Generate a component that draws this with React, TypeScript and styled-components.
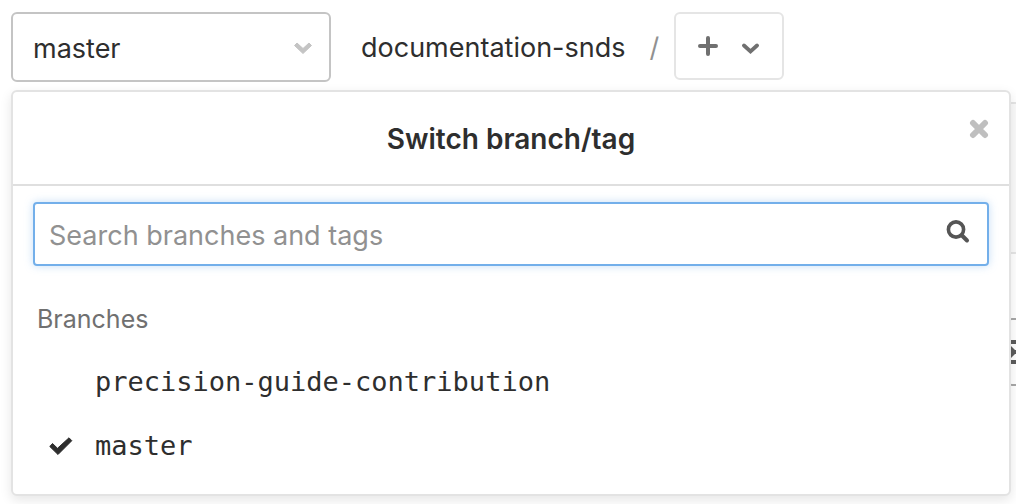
import React from 'react';
import styled, { createGlobalStyle } from 'styled-components';

const GlobalStyle = createGlobalStyle`
  * { box-sizing: border-box; }
  body {
    margin: 0;
    background: #fff;
    color: #2e2e2e;
    font-family: Inter, sans-serif;
    font-size: 27px;
    line-height: 36px;
  }
  button, input { font: inherit; color: inherit; margin: 0; }
`;

const Page = styled.main`
  position: relative;
  min-height: 504px;
  overflow: hidden;
`;

const Toolbar = styled.header`
  display: flex;
  align-items: flex-start;
  padding: 12px 11px 0;
  height: 102px;
`;

const RefToggle = styled.button`
  display: flex;
  align-items: center;
  justify-content: space-between;
  width: 320px;
  height: 70px;
  padding: 3px 17px 0 20px;
  border: 2px solid #c4c4c4;
  border-radius: 6px;
  background: #fff;
`;

const Breadcrumb = styled.nav`
  display: flex;
  gap: 24px;
  padding: 18px 15px 0 30px;
`;

const Crumb = styled.a`
  color: #2e2e2e;
  text-decoration: none;
`;

const Separator = styled.span`
  color: #919191;
`;

const AddButton = styled.button`
  display: flex;
  align-items: center;
  gap: 24px;
  height: 68px;
  padding: 0 23px 0 22px;
  border: 2px solid #e5e5e5;
  border-radius: 6px;
  background: #fff;
  color: #707070;
`;

const CommitPanel = styled.section`
  height: 152px;
  margin-left: 16px;
  border: 2px solid #e5e5e5;
  border-right: 0;
  background: #fafafa;
`;

const FileActions = styled.div`
  display: flex;
  justify-content: flex-end;
  margin: 64px -58px 0 0;
`;

const FileButton = styled.button`
  display: flex;
  align-items: center;
  width: 68px;
  height: 68px;
  padding: 0 0 0 3px;
  border: 2px solid #a7a7a7;
  border-radius: 6px;
  background: #fff;
  color: #5c5c5c;
`;

const Menu = styled.section`
  position: absolute;
  top: 90px;
  left: 11px;
  right: 5px;
  padding-bottom: 16px;
  border: 2px solid #e3e3e3;
  border-radius: 6px;
  background: #fff;
  box-shadow: 0 4px 12px rgba(0, 0, 0, 0.1);
`;

const MenuHeader = styled.div`
  display: flex;
  justify-content: center;
  position: relative;
  padding: 29px 20px 27px;
  border-bottom: 2px solid #dfdfdf;
`;

const MenuTitle = styled.h2`
  margin: 0;
  font-size: 28px;
  font-weight: 600;
`;

const CloseButton = styled.button`
  display: flex;
  position: absolute;
  top: 27px;
  right: 20px;
  padding: 0;
  border: 0;
  background: none;
  color: #bfbfbf;
`;

const SearchField = styled.label`
  display: flex;
  align-items: center;
  height: 64px;
  margin: 16px 20px 0;
  padding: 0 17px 0 14px;
  border: 2px solid #73afea;
  border-radius: 4px;
  box-shadow: 0 0 8px rgba(115, 175, 234, 0.4);
  color: #555;
`;

const SearchInput = styled.input`
  flex: 1;
  min-width: 0;
  padding: 3px 0 0;
  border: 0;
  outline: 0;
  background: none;
  &::placeholder { color: #919191; opacity: 1; }
`;

const GroupTitle = styled.h3`
  margin: 35px 24px 13px;
  color: #707070;
  font-size: 25px;
  font-weight: 400;
`;

const BranchList = styled.ul`
  margin: 0;
  padding: 0;
  list-style: none;
`;

const BranchButton = styled.button`
  display: grid;
  grid-template-columns: 46px 1fr;
  align-items: center;
  width: 100%;
  height: 64px;
  padding: 0 36px;
  border: 0;
  background: none;
  font-family: "DejaVu Sans Mono", monospace;
  text-align: left;
`;

const BranchName = styled.span`
  grid-column: 2;
`;

const ToggleChevron = () => (
  <svg width="18" height="14" viewBox="0 0 18 14" fill="#c4c4c4" stroke="#c4c4c4" strokeLinejoin="round" aria-hidden="true">
    <path d="M3 1 9 6.500 15 1 17.500 3.500 9 11.500 0.500 3.500Z" />
  </svg>
);

const AddChevron = () => (
  <svg width="17" height="18" viewBox="0 0 17 18" fill="none" stroke="currentColor" strokeWidth="3.8" strokeLinecap="round" aria-hidden="true">
    <path d="M2 8.500 8.500 14.500 15 8.500" />
  </svg>
);

const PlusIcon = () => (
  <svg width="20" height="20" viewBox="0 0 20 20" stroke="currentColor" strokeWidth="4" strokeLinecap="round" aria-hidden="true">
    <path d="M10 2v16M2 10h16" />
  </svg>
);

const CloseIcon = () => (
  <svg width="20" height="20" viewBox="0 0 20 20" stroke="currentColor" strokeWidth="6" strokeLinecap="round" aria-hidden="true">
    <path d="M4 4 16 16M16 4 4 16" />
  </svg>
);

const SearchIcon = () => (
  <svg width="24" height="28" viewBox="0 0 24 28" fill="none" stroke="currentColor" strokeWidth="3.6" aria-hidden="true">
    <circle cx="10" cy="9.500" r="7.600" />
    <path d="M16 15.500 21 20.500" strokeWidth="4" strokeLinecap="round" />
  </svg>
);

const CheckIcon = () => (
  <svg width="24" height="20" viewBox="0 0 24 20" fill="currentColor" stroke="currentColor" strokeLinejoin="round" aria-hidden="true">
    <path d="M0.800 10.500 3.500 7.500 8.500 12.300 20 1.800 22.800 4.700 9 18.500Z" />
  </svg>
);

const IndentIcon = () => (
  <svg width="28" height="26" viewBox="0 0 28 26" fill="currentColor" aria-hidden="true">
    <path d="M0 1h28v4H0zM0 21h28v4H0zM0 7l4 4h24v4H4l-4 4z" />
  </svg>
);

const branches = ['precision-guide-contribution', 'master'];

export default function App() {
  const current = 'master';
  return (
    <>
      <GlobalStyle />
      <Page>
        <Toolbar>
          <RefToggle type="button" aria-haspopup="true" aria-expanded="true">
            {current}
            <ToggleChevron />
          </RefToggle>
          <Breadcrumb aria-label="Repository path">
            <Crumb href="#">documentation-snds</Crumb>
            <Separator>/</Separator>
          </Breadcrumb>
          <AddButton type="button" aria-label="Add to tree">
            <PlusIcon />
            <AddChevron />
          </AddButton>
        </Toolbar>
        <CommitPanel aria-label="Last commit" />
        <FileActions>
          <FileButton type="button" aria-label="File list"><IndentIcon /></FileButton>
        </FileActions>
        <Menu aria-label="Switch branch or tag">
          <MenuHeader>
            <MenuTitle>Switch branch/tag</MenuTitle>
            <CloseButton type="button" aria-label="Close"><CloseIcon /></CloseButton>
          </MenuHeader>
          <SearchField>
            <SearchInput type="text" placeholder="Search branches and tags" aria-label="Search branches and tags" />
            <SearchIcon />
          </SearchField>
          <GroupTitle>Branches</GroupTitle>
          <BranchList>
            {branches.map((branch) => (
              <li key={branch}>
                <BranchButton type="button">
                  {branch === current && <CheckIcon />}
                  <BranchName>{branch}</BranchName>
                </BranchButton>
              </li>
            ))}
          </BranchList>
        </Menu>
      </Page>
    </>
  );
}
